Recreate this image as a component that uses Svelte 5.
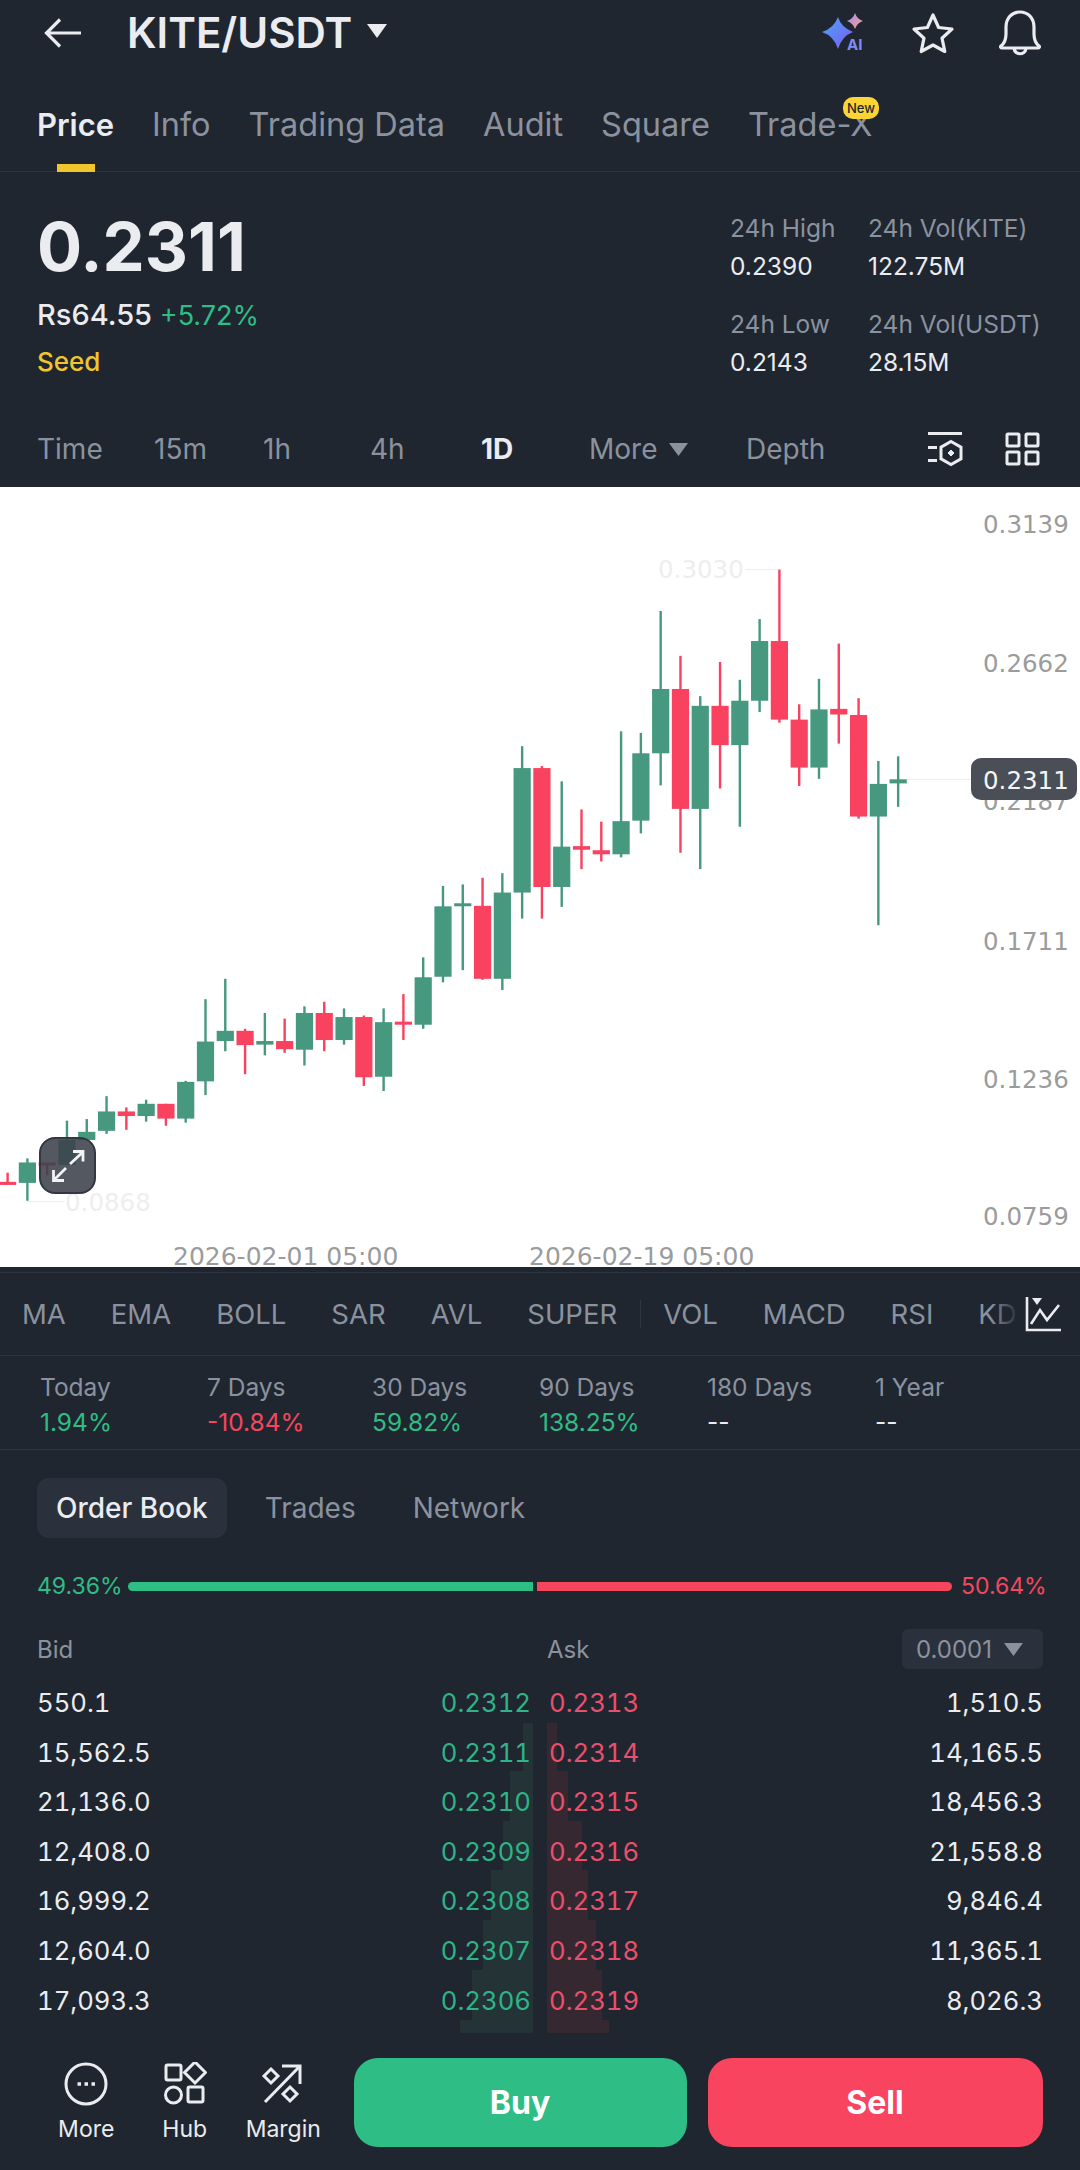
<script>
	const tabs = ['Price', 'Info', 'Trading Data', 'Audit', 'Square', 'Trade-X'];
	const times = [['Time', 117], ['15m', 109], ['1h', 107], ['4h', 111], ['1D', 108], ['More', 157], ['Depth', 0]];
	const indicators = ['MA', 'EMA', 'BOLL', 'SAR', 'AVL', 'SUPER'];
	const indicators2 = ['VOL', 'MACD', 'RSI', 'KD'];
	const periods = [
		['Today', '1.94%', 'up'],
		['7 Days', '-10.84%', 'down'],
		['30 Days', '59.82%', 'up'],
		['90 Days', '138.25%', 'up'],
		['180 Days', '--', ''],
		['1 Year', '--', '']
	];
	const book = [
		['550.1', '0.2312', '0.2313', '1,510.5'],
		['15,562.5', '0.2311', '0.2314', '14,165.5'],
		['21,136.0', '0.2310', '0.2315', '18,456.3'],
		['12,408.0', '0.2309', '0.2316', '21,558.8'],
		['16,999.2', '0.2308', '0.2317', '9,846.4'],
		['12,604.0', '0.2307', '0.2318', '11,365.1'],
		['17,093.3', '0.2306', '0.2319', '8,026.3']
	];
	// depth steps: height, bid width, ask width
	const depth = [
		[48, 10, 10],
		[50, 23, 21],
		[49, 30, 35],
		[50, 42, 41],
		[50, 50, 49],
		[50, 61, 55],
		[13, 73, 62]
	];
	// high, body top, body bottom, low, measured off the reference
	const candles = [
		['r', 1340, 1358, 1364, 1364],
		['g', 1312, 1320, 1360, 1395],
		['r', 1320, 1320, 1326, 1345],
		['g', 1238, 1276, 1325, 1325],
		['g', 1235, 1260, 1276, 1276],
		['g', 1190, 1220, 1258, 1264],
		['r', 1212, 1220, 1229, 1256],
		['g', 1197, 1205, 1229, 1240],
		['r', 1205, 1205, 1234, 1248],
		['g', 1160, 1162, 1234, 1242],
		['g', 1000, 1083, 1161, 1188],
		['g', 960, 1062, 1082, 1102],
		['r', 1058, 1062, 1090, 1147],
		['g', 1027, 1082, 1089, 1110],
		['r', 1038, 1082, 1098, 1105],
		['g', 1014, 1027, 1099, 1130],
		['r', 1005, 1027, 1080, 1102],
		['g', 1018, 1035, 1080, 1089],
		['r', 1032, 1035, 1153, 1170],
		['g', 1018, 1045, 1152, 1180],
		['r', 990, 1044, 1050, 1080],
		['g', 918, 957, 1050, 1058],
		['g', 778, 818, 956, 967],
		['g', 775, 812, 817, 943],
		['r', 762, 817, 960, 962],
		['g', 753, 791, 960, 982],
		['g', 504, 547, 791, 842],
		['r', 543, 547, 780, 842],
		['g', 573, 701, 780, 819],
		['r', 628, 700, 707, 745],
		['r', 652, 708, 716, 730],
		['g', 475, 651, 716, 722],
		['g', 478, 518, 650, 675],
		['g', 239, 392, 518, 581],
		['r', 327, 392, 627, 713],
		['g', 406, 425, 627, 745],
		['r', 339, 425, 502, 587],
		['g', 374, 415, 502, 662],
		['g', 255, 298, 415, 437],
		['r', 158, 298, 452, 458],
		['r', 422, 452, 546, 582],
		['g', 372, 432, 546, 568],
		['r', 303, 431, 442, 499],
		['r', 410, 443, 642, 646],
		['g', 533, 578, 642, 855],
		['g', 524, 569, 577, 623]
	];
	const cy = (z) => z / 1.96 + 2;
	const axis = [['0.3139', 37], ['0.2662', 175.5], ['0.2187', 314], ['0.1711', 453.5], ['0.1236', 592], ['0.0759', 729]];
</script>

<div class="page">
	<header class="top">
		<svg class="back" width="40" height="32" viewBox="0 0 40 32" fill="none" stroke="#eaecef" stroke-width="3.2">
			<path d="M38 16H4M17 2.500 3.500 16 17 29.500" />
		</svg>
		<span class="pair">KITE/USDT</span>
		<svg class="caret" width="22" height="15" viewBox="0 0 22 15"><path d="M1 1h20L11 15z" fill="#eaecef" /></svg>
		<div class="top-icons">
			<svg width="46" height="40" viewBox="0 0 46 40">
				<defs>
					<linearGradient id="spark" x1="0" y1="0" x2="1" y2="1">
						<stop offset="0" stop-color="#4da3f7" />
						<stop offset="1" stop-color="#7a5cf0" />
					</linearGradient>
					<linearGradient id="spark2" x1="0" y1="0" x2="1" y2="1">
						<stop offset="0" stop-color="#a88af0" />
						<stop offset="1" stop-color="#f0a58a" />
					</linearGradient>
				</defs>
				<path d="M16 4q3 10 15 15q-11 4-15 17q-4-13-16-17q12-4 16-15z" fill="url(#spark)" />
				<path d="M33 0q2 6 8 8q-6 2-8 8q-2-6-8-8q6-2 8-8z" fill="url(#spark2)" />
				<text x="25" y="37" class="ai">AI</text>
			</svg>
			<svg width="44" height="42" viewBox="0 0 44 42" fill="none" stroke="#eaecef" stroke-width="3.2" stroke-linejoin="round">
				<path d="M22 3l5.600 12.500 13.400 1.500-10 9.200 2.800 13.300L22 33l-11.800 6.500L13 26.200 3 17l13.400-1.500z" />
			</svg>
			<svg width="44" height="46" viewBox="0 0 44 46" fill="none" stroke="#eaecef" stroke-width="3.200" stroke-linejoin="round">
				<path d="M3 36c4-3 5-7 5-12v-7C8 8 14 2 22 2s14 6 14 15v7c0 5 1 9 5 12 1 1 0 2-1 2H4c-1 0-2-1-1-2z" />
				<path d="M16 38.500c1 7 11 7 12 0" />
			</svg>
		</div>
	</header>

	<nav class="tabs">
		{#each tabs as t, i}
			<span class="tab" class:on={i === 0}>
				{t}
				{#if t === 'Trade-X'}<em class="new">New</em>{/if}
			</span>
		{/each}
	</nav>

	<section class="price">
		<div class="price-left">
			<div class="last">0.2311</div>
			<div class="fiat">Rs64.55 <span class="up">+5.72%</span></div>
			<div class="seed">Seed</div>
		</div>
		<div class="stats">
			<div class="stat"><label>24h High</label><b>0.2390</b></div>
			<div class="stat"><label>24h Vol(KITE)</label><b>122.75M</b></div>
			<div class="stat"><label>24h Low</label><b>0.2143</b></div>
			<div class="stat"><label>24h Vol(USDT)</label><b>28.15M</b></div>
		</div>
	</section>

	<div class="times">
		{#each times as [t, w]}
			<span class="time" class:on={t === '1D'} style:width={w ? w + 'px' : 'auto'}>
				{t}
				{#if t === 'More'}
					<svg width="19" height="13" viewBox="0 0 19 13"><path d="M0 0h19L9.500 13z" fill="#8b929e" /></svg>
				{/if}
			</span>
		{/each}
		<div class="time-icons">
			<svg width="36" height="36" viewBox="0 0 36 36" fill="none" stroke="#eaecef" stroke-width="3">
				<path d="M1 2.500h34M1 16.500h9M1 29.500h9" />
				<path d="M24 10.500l10 5.700v11.600l-10 5.700-10-5.700V16.200z" />
				<path d="M24 19l3 3-3 3-3-3z" fill="#eaecef" stroke-width="1" />
			</svg>
			<svg width="35" height="34" viewBox="0 0 35 34" fill="none" stroke="#eaecef" stroke-width="3">
				<rect x="2" y="2" width="12" height="12" rx="1" />
				<rect x="21" y="2" width="12" height="12" rx="1" />
				<rect x="2" y="20" width="12" height="12" rx="1" />
				<rect x="21" y="20" width="12" height="12" rx="1" />
			</svg>
		</div>
	</div>

	<div class="chart">
		<svg width="1080" height="780" viewBox="0 0 1080 780">
			<g class="axis">
				{#each axis as [v, y]}
					<text x="983" y={y + 9}>{v}</text>
				{/each}
				<text x="173" y="778" class="date">2026-02-01 05:00</text>
				<text x="529" y="778" class="date">2026-02-19 05:00</text>
			</g>
			<g class="faint">
				<text x="658" y="91">0.3030</text>
				<text x="65" y="724">0.0868</text>
			</g>
			<path d="M745 82.500H780M27 714.500H65M905 292.500H971" stroke="#eeeeee" stroke-width="1" fill="none" />
			{#each candles as [c, hi, top, bot, lo], i}
				{@const x = 7.6 + i * 19.79}
				{@const color = c === 'g' ? '#46987e' : '#f8425f'}
				<rect x={x - 1.2} y={cy(hi)} width="2.4" height={cy(lo) - cy(hi)} fill={color} />
				<rect x={x - 8.6} y={cy(top)} width="17.200" height={Math.max(cy(bot) - cy(top), 3)} fill={color} />
			{/each}
			<rect x="971" y="271" width="106" height="42" rx="10" fill="#4a4e57" />
			<text x="983" y="302" class="tag">0.2311</text>
		</svg>
		<button class="expand" aria-label="Expand">
			<svg width="32" height="32" viewBox="0 0 32 32" fill="none" stroke="#f2f3f5" stroke-width="2.800">
				<path d="M18 14L31 2M21 1.500h10v10M14 18L2 30M1.500 20v10.500H12" />
			</svg>
		</button>
	</div>

	<div class="inds">
		{#each indicators as t}<span>{t}</span>{/each}
		<i class="sep"></i>
		{#each indicators2 as t}<span>{t}</span>{/each}
		<div class="ind-fade">
			<svg width="36" height="36" viewBox="0 0 36 36" fill="none" stroke="#eaecef" stroke-width="2.600">
				<path d="M2 1v33h34" />
				<path d="M6 28l9-14 7 10 12-15" />
				<path d="M7 2h10l-5 7z" fill="#eaecef" stroke="none" />
			</svg>
		</div>
	</div>

	<div class="periods">
		{#each periods as [label, val, dir]}
			<div class="period">
				<label>{label}</label>
				<b class={dir}>{val}</b>
			</div>
		{/each}
	</div>

	<div class="book-tabs">
		<span class="chip">Order Book</span>
		<span>Trades</span>
		<span>Network</span>
	</div>

	<div class="ratio">
		<span class="up pct">49.36%</span>
		<div class="bar">
			<i class="bar-buy"></i>
			<i class="bar-sell"></i>
		</div>
		<span class="down pct">50.64%</span>
	</div>

	<div class="book-head">
		<span class="bid-h">Bid</span>
		<span class="ask-h">Ask</span>
		<span class="step">0.0001
			<svg width="19" height="13" viewBox="0 0 19 13"><path d="M0 0h19L9.500 13z" fill="#8b929e" /></svg>
		</span>
	</div>

	<div class="book">
		<div class="depth">
			{#each depth as [h, b, a]}
				<div class="step-row" style:height={h + 'px'}>
					<i class="d-bid" style:width={b + 'px'}></i>
					<i class="d-ask" style:width={a + 'px'}></i>
				</div>
			{/each}
		</div>
		{#each book as [bq, bp, ap, aq]}
			<div class="row">
				<div class="half"><span>{bq}</span><span class="up">{bp}</span></div>
				<div class="half"><span class="down">{ap}</span><span>{aq}</span></div>
			</div>
		{/each}
	</div>

	<footer class="bottom">
		<div class="nav-item">
			<svg width="44" height="44" viewBox="0 0 44 44" fill="none" stroke="#eaecef" stroke-width="3">
				<circle cx="22" cy="22" r="20" />
				<path d="M13.500 22h3.500M20.500 22h3.500M27.500 22h3.500" stroke-width="3.600" />
			</svg>
			<span>More</span>
		</div>
		<div class="nav-item">
			<svg width="44" height="44" viewBox="0 0 44 44" fill="none" stroke="#eaecef" stroke-width="3">
				<rect x="3" y="3" width="15" height="15" rx="1.500" />
				<path d="M32 0l10.500 10.500L32 21 21.500 10.500z" />
				<circle cx="10.500" cy="33" r="8" />
				<rect x="25" y="25" width="15" height="15" rx="1.500" />
			</svg>
			<span>Hub</span>
		</div>
		<div class="nav-item">
			<svg width="44" height="44" viewBox="0 0 44 44" fill="none" stroke="#eaecef" stroke-width="3">
				<path d="M4 40L39 4M21 4h18v18" />
				<path d="M10 7l7 7-7 7-7-7zM29 25l7 7-7 7-7-7z" />
			</svg>
			<span>Margin</span>
		</div>
		<button class="buy">Buy</button>
		<button class="sell">Sell</button>
	</footer>
</div>

<style>
	:global(body) {
		background: #1f2630;
	}

	.page {
		width: 1080px;
		height: 2170px;
		overflow: hidden;
		background: #1f2630;
		color: #eaecef;
		font-family: Inter, 'Noto Sans', sans-serif;
		font-size: 26px;
	}

	.up {
		color: #2ebd85;
	}

	.down {
		color: #f6465d;
	}

	.top {
		display: flex;
		align-items: center;
		height: 65px;
		padding: 0 38px 0 43px;
	}

	.back {
		margin-right: 44px;
	}

	.pair {
		font-size: 42px;
		font-weight: 600;
	}

	.caret {
		margin-left: 14px;
		margin-bottom: 4px;
	}

	.top-icons {
		margin-left: auto;
		display: flex;
		align-items: center;
		gap: 43px;
	}

	.ai {
		font: 700 15px Inter, sans-serif;
		fill: #7f8cf5;
	}

	.tabs {
		display: flex;
		gap: 38px;
		height: 107px;
		padding: 0 37px;
		box-sizing: border-box;
		border-bottom: 1px solid #2f3641;
		font-size: 32.500px;
		color: #8b929e;
		line-height: 120px;
	}

	.tab {
		position: relative;
	}

	.tab.on {
		color: #eaecef;
		font-size: 31px;
		font-weight: 600;
	}

	.tab.on::after {
		content: '';
		position: absolute;
		left: 20px;
		bottom: -1px;
		width: 38px;
		height: 8px;
		background: #f0c52e;
	}

	.new {
		position: absolute;
		left: 95px;
		top: 32px;
		width: 36px;
		height: 22px;
		border-radius: 10px;
		background: #fcd535;
		color: #1f2630;
		font: 500 13px/22px Inter, sans-serif;
		text-align: center;
	}

	.price {
		display: flex;
		justify-content: space-between;
		height: 243px;
		padding-left: 37px;
	}

	.last {
		margin-top: 43px;
		font-size: 67px;
		line-height: 64px;
		font-weight: 700;
	}

	.fiat {
		margin-top: 18px;
		font-size: 29px;
		line-height: 36px;
		font-weight: 500;
	}

	.fiat .up {
		font-size: 27px;
		font-weight: 400;
	}

	.seed {
		margin-top: 13px;
		font-size: 26px;
		line-height: 30px;
		font-weight: 500;
		color: #f0c52e;
	}

	.stats {
		display: grid;
		width: 350px;
		grid-template-columns: 138px auto;
		grid-auto-rows: 96px;
		padding-top: 37px;
	}

	.stat {
		display: flex;
		flex-direction: column;
	}

	.stat label {
		font-size: 24.500px;
		line-height: 38px;
		color: #8b929e;
	}

	.stat b {
		font-size: 24.500px;
		line-height: 38px;
		font-weight: 400;
	}

	.times {
		display: flex;
		align-items: center;
		height: 72px;
		padding: 0 40px 4px 37px;
		box-sizing: border-box;
		font-size: 28px;
		color: #8b929e;
	}

	.time.on {
		color: #eaecef;
		font-weight: 700;
	}

	.time svg {
		margin-left: 4px;
		margin-bottom: 3px;
	}

	.time-icons {
		margin-left: auto;
		display: flex;
		align-items: center;
		gap: 42px;
	}

	.chart {
		position: relative;
		height: 780px;
		background: #fff;
	}

	.chart svg {
		display: block;
		overflow: visible;
	}

	.axis text,
	.faint text,
	.tag {
		font: 24.500px 'DejaVu Sans', sans-serif;
		fill: #9b9b9b;
	}

	.axis .date {
		font-size: 25px;
	}

	.faint text {
		fill: #eeeeee;
	}

	.chart .tag {
		fill: #f5f5f5;
	}

	.expand {
		position: absolute;
		left: 39px;
		top: 650px;
		width: 57px;
		height: 57px;
		padding: 0;
		display: flex;
		align-items: center;
		justify-content: center;
		border: 2px solid #33373f;
		border-radius: 16px;
		background: rgba(60, 65, 75, 0.88);
	}

	.inds {
		position: relative;
		display: flex;
		align-items: center;
		gap: 45px;
		height: 84px;
		margin-top: 5px;
		padding: 0 22px;
		border-top: 1px solid #2f3641;
		border-bottom: 1px solid #2f3641;
		box-sizing: border-box;
		font-size: 27.500px;
		color: #8b929e;
		white-space: nowrap;
		overflow: hidden;
	}

	.sep {
		width: 1px;
		height: 28px;
		background: #2f3641;
		margin: 0 -22.500px;
	}

	.ind-fade {
		position: absolute;
		right: 0;
		top: 0;
		bottom: 0;
		width: 90px;
		display: flex;
		align-items: center;
		padding-left: 35px;
		box-sizing: border-box;
		background: linear-gradient(90deg, rgba(31, 38, 48, 0), #1f2630 34%);
	}

	.periods {
		display: grid;
		grid-template-columns: 167px 165px 167px 168px 168px auto;
		height: 94px;
		padding: 13px 0 0 40px;
		box-sizing: border-box;
		border-bottom: 1px solid #2f3641;
	}

	.period {
		display: flex;
		flex-direction: column;
	}

	.period label {
		font-size: 24.500px;
		line-height: 36px;
		color: #8b929e;
	}

	.period b {
		font-size: 24.500px;
		line-height: 34px;
		font-weight: 400;
	}

	.book-tabs {
		display: flex;
		align-items: center;
		gap: 19px;
		height: 60px;
		margin-top: 28px;
		padding: 0 37px;
		font-size: 28px;
		color: #8b929e;
	}

	.book-tabs span {
		padding: 1px 19px 0;
		line-height: 59px;
	}

	.book-tabs .chip {
		border-radius: 12px;
		background: #2a303c;
		color: #eaecef;
		font-weight: 500;
	}

	.ratio {
		display: flex;
		align-items: center;
		gap: 9px;
		height: 40px;
		margin-top: 28px;
		padding: 0 37px;
		font-size: 23px;
	}

	.pct {
		width: 82px;
		white-space: nowrap;
	}

	.bar {
		flex: 1;
		display: flex;
		gap: 4px;
	}

	.bar i {
		height: 9px;
	}

	.bar-buy {
		width: 405px;
		background: #2ebd85;
		border-radius: 5px 0 0 5px;
	}

	.bar-sell {
		flex: 1;
		background: #f6465d;
		border-radius: 0 5px 5px 0;
	}

	.book-head {
		display: flex;
		align-items: center;
		height: 40px;
		margin-top: 23px;
		padding: 0 37px;
		font-size: 24px;
		color: #8b929e;
	}

	.bid-h {
		width: 510px;
	}

	.step {
		margin-left: auto;
		display: flex;
		align-items: center;
		gap: 12px;
		height: 40px;
		padding: 0 20px 0 14px;
		border-radius: 6px;
		background: #2a303c;
	}

	.book {
		position: relative;
		margin-top: 9px;
		padding: 0 37px;
	}

	.depth {
		position: absolute;
		left: 0;
		right: 0;
		top: 45px;
	}

	.step-row {
		position: relative;
	}

	.d-bid {
		position: absolute;
		right: 547px;
		top: 0;
		bottom: 0;
		background: #233336;
	}

	.d-ask {
		position: absolute;
		left: 547px;
		top: 0;
		bottom: 0;
		background: #352831;
	}

	.row {
		position: relative;
		display: flex;
		gap: 18px;
		height: 49.600px;
		line-height: 49.600px;
		font-size: 25.700px;
		font-variant-numeric: tabular-nums;
	}

	.row .up {
		color: #2fb388;
	}

	.row .down {
		color: #ea4f6b;
	}

	.half {
		width: 494px;
		display: flex;
		justify-content: space-between;
	}

	.bottom {
		display: flex;
		align-items: flex-start;
		margin-top: 33px;
		padding: 0 37px;
	}

	.nav-item {
		width: 98.500px;
		display: flex;
		flex-direction: column;
		align-items: center;
		padding-top: 4px;
		font-size: 23px;
	}

	.nav-item span {
		margin-top: 9px;
	}

	.buy,
	.sell {
		height: 89px;
		border: 0;
		border-radius: 24px;
		color: #fff;
		font: 700 32px Inter, sans-serif;
	}

	.buy {
		width: 333px;
		margin-left: 21px;
		background: #2ebd85;
	}

	.sell {
		width: 335px;
		margin-left: 21px;
		background: #f8445f;
	}
</style>
